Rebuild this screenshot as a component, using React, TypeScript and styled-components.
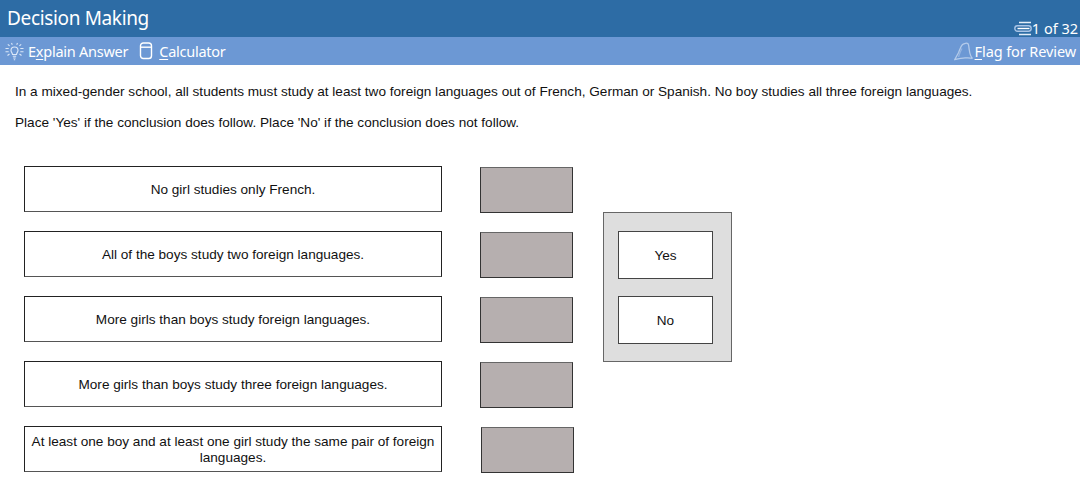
import React from "react";
import styled, { createGlobalStyle } from "styled-components";

const Global = createGlobalStyle`
  html, body { margin: 0; padding: 0; background: #fff; }
  body { font-family: "Liberation Sans", Arial, sans-serif; color: #111; }
`;
const Page = styled.div`width: 1080px; height: 489px; overflow: hidden; background: #fff;`;
const TitleBar = styled.header`
  height: 37px; background: #2d6ca5; color: #fff; display: flex; justify-content: space-between;
  font-family: "Noto Sans", "DejaVu Sans", sans-serif; box-sizing: border-box; padding: 0 2px 0 7px;
`;
const Title = styled.h1`margin: 0; font-size: 19px; font-weight: 400; line-height: 36px; letter-spacing: -0.35px;`;
const Counter = styled.div`
  align-self: flex-end; display: flex; align-items: center; font-size: 14.5px; line-height: 17px; gap: 0;
`;
const ToolBar = styled.nav`
  height: 28px; background: #6c98d4; color: #fff; display: flex; align-items: center; justify-content: space-between;
  font-family: "Noto Sans", "DejaVu Sans", sans-serif; font-size: 14.5px; box-sizing: border-box; padding: 0 4px 0 5px;
  letter-spacing: -0.25px;
`;
const ToolGroup = styled.div`display: flex; align-items: center;`;
const Tool = styled.span<{ $gap?: number }>`
  display: flex; align-items: center; gap: ${p => p.$gap ?? 4}px; margin-right: 11px; &:last-child { margin-right: 0; }
`;
const FlagTool = styled(Tool)`letter-spacing: -0.1px;`;
const Key = styled.span`text-decoration: underline; text-underline-offset: 2px; text-decoration-thickness: 1px;`;
const Content = styled.main`padding: 19px 15px 0; font-size: 13.6px; line-height: 16px;`;
const Para = styled.p`margin: 0 0 15px; white-space: nowrap;`;
const Board = styled.section`display: flex; align-items: flex-start; margin: 35px 0 0 9px;`;
const Statements = styled.div`display: flex; flex-direction: column; gap: 19px; width: 418px;`;
const Statement = styled.div`
  height: 46px; box-sizing: border-box; border: 1px solid #222; border-bottom-color: #555; background: #fff;
  display: flex; align-items: center; justify-content: center; text-align: center; padding: 2px 5px 0;
  font-size: 13.6px; line-height: 16px;
`;
const Drops = styled.div`display: flex; flex-direction: column; gap: 19px; margin: 1px 0 0 38px; width: 93px;`;
const Drop = styled.div<{ $shift?: number }>`
  height: 46px; box-sizing: border-box; width: 93px; background: #b6afaf; border: 1px solid #333;
  border-top-color: #666; transform: translateX(${p => p.$shift ?? 0}px);
`;
const Bank = styled.aside`
  margin: 46px 0 0 30px; width: 129px; height: 150px; box-sizing: border-box; background: #dedede;
  border: 1px solid #666; padding: 18px 17px 0 14px; display: flex; flex-direction: column; gap: 17px;
`;
const Choice = styled.div`
  height: 48px; box-sizing: border-box; background: #fff; border: 1px solid #444; width: 95px; padding-top: 1px;
  display: flex; align-items: center; justify-content: center; font-size: 13.6px;
`;

const Bulb = () => (
  <svg width="19" height="19" viewBox="0 0 19 19" fill="none" stroke="#dce8f8" strokeWidth="1.100" aria-hidden>
    <path d="M6 8.500a3.500 3.500 0 1 1 7 0c0 1.500-1.300 2.200-1.500 4H7.500C7.300 10.700 6 10 6 8.500Z" />
    <path d="M7.800 14.200h3.400M8.300 16h2.400M8.800 17.700h1.400" />
    <path d="M6.500 1l.8 1.700M12.500 1l-.8 1.700M2.800 2.300l1.800 1.500M16.200 2.300l-1.800 1.500M.5 6.500h3.200M15.300 6.500h3.200M.5 9.800h3.200M15.300 9.800h3.200M2.500 13.500l2-1.500M16.500 13.500l-2-1.500" />
  </svg>
);
const Calc = () => (
  <svg width="14" height="18" viewBox="0 0 14 18" fill="none" stroke="#fff" strokeWidth="1.400" aria-hidden>
    <rect x="1.500" y="1" width="11" height="15.500" rx="2.800" />
    <path d="M1.500 5.200h11" />
  </svg>
);
const Flag = () => (
  <svg width="20" height="19" viewBox="0 0 20 19" fill="none" stroke="#b4cbea" strokeWidth="1.300" aria-hidden>
    <path d="M.8 17.500c1.200-2.500 2.600-4.500 3.800-7C5.700 8 6.500 4.500 8.500 2.500c1.700-1.300 4.500-1.700 5.500-.8 1 1.300.8 4 1.300 6.300.4 3 1.300 6.500 3.200 8.500-2-.8-5-.8-7.500-.6-3.200.3-6.500.9-10.200 1.600Z" />
    <path d="M4.500 15c1-3 2-6 3.500-8.500" strokeOpacity=".55" />
  </svg>
);
const Stack = () => (
  <svg width="18" height="15" viewBox="0 0 18 15" fill="none" aria-hidden>
    <path d="M5 1.500h12M5 13.500h12" stroke="#e4edf8" strokeWidth="1.600" />
    <rect x=".8" y="4.800" width="16.400" height="5.400" rx="2.700" stroke="#a9c4e6" strokeWidth="1.400" />
    <path d="M3.500 7.500h12" stroke="#fff" strokeWidth="1.400" />
  </svg>
);

const statements = [
  "No girl studies only French.",
  "All of the boys study two foreign languages.",
  "More girls than boys study foreign languages.",
  "More girls than boys study three foreign languages.",
  "At least one boy and at least one girl study the same pair of foreign languages.",
];

export default function App() {
  return (
    <Page>
      <Global />
      <TitleBar>
        <Title>Decision Making</Title>
        <Counter><Stack />1 of 32</Counter>
      </TitleBar>
      <ToolBar>
        <ToolGroup>
          <Tool><Bulb /><span>E<Key>x</Key>plain Answer</span></Tool>
          <Tool $gap={6}><Calc /><span><Key>C</Key>alculator</span></Tool>
        </ToolGroup>
        <FlagTool $gap={1}><Flag /><span><Key>F</Key>lag for Review</span></FlagTool>
      </ToolBar>
      <Content>
        <Para>In a mixed-gender school, all students must study at least two foreign languages out of French, German or Spanish. No boy studies all three foreign languages.</Para>
        <Para>Place 'Yes' if the conclusion does follow. Place 'No' if the conclusion does not follow.</Para>
        <Board>
          <Statements>
            {statements.map(s => <Statement key={s}>{s}</Statement>)}
          </Statements>
          <Drops>
            {statements.map((s, i) => <Drop key={s} $shift={i === 4 ? 1 : 0} />)}
          </Drops>
          <Bank>
            <Choice>Yes</Choice>
            <Choice>No</Choice>
          </Bank>
        </Board>
      </Content>
    </Page>
  );
}
